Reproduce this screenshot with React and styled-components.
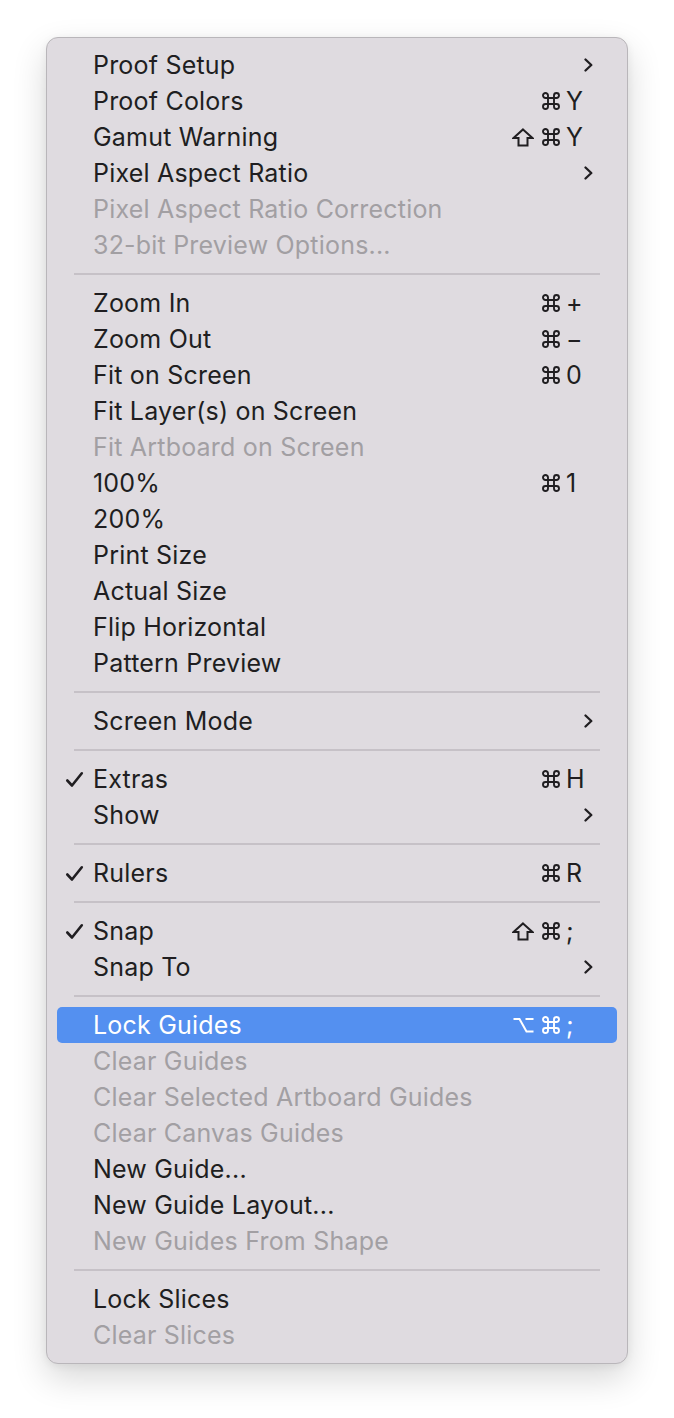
import React from "react";
import styled, { createGlobalStyle } from "styled-components";

const Global = createGlobalStyle`
  html, body { margin: 0; padding: 0; background: #ffffff; }
  body { font-family: Inter, "Noto Sans", sans-serif; -webkit-font-smoothing: antialiased; }
`;

const Page = styled.div`
  width: 674px;
  height: 1418px;
  padding: 37px 0 0 46px;
  box-sizing: border-box;
`;

const Panel = styled.div`
  width: 582px;
  box-sizing: border-box;
  background: #dfdbe0;
  border: 1px solid #b9b6ba;
  border-radius: 12px;
  padding: 9px 10px 10px;
  box-shadow: 0 14px 34px rgba(0, 0, 0, 0.16), 0 2px 8px rgba(0, 0, 0, 0.06);
  display: flex;
  flex-direction: column;
`;

const Row = styled.div`
  height: 36px;
  display: flex;
  align-items: center;
  position: relative;
  padding: 0 24px 0 36px;
  border-radius: 5px;
  font-size: 25px;
  letter-spacing: 0.2px;
  color: ${(p) => (p.$active ? "#ffffff" : p.$disabled ? "#a29fa3" : "#201e21")};
  background: ${(p) => (p.$active ? "#5490f0" : "transparent")};
`;

const Label = styled.span`
  flex: 1;
  white-space: nowrap;
`;

const Check = styled.svg`
  position: absolute;
  left: 8px;
  top: 10px;
  width: 19px;
  height: 17px;
`;

const Shortcut = styled.div`
  display: flex;
  align-items: center;
`;

const Mods = styled.div`
  display: flex;
  align-items: center;
  gap: 7px;
  margin-right: 5px;
`;

const Key = styled.span`
  width: 27px;
  text-align: left;
`;

const Chevron = styled.svg`
  width: 9px;
  height: 14px;
`;

const Separator = styled.div`
  height: 22px;
  display: flex;
  align-items: center;
  padding: 0 17px;
  &::after {
    content: "";
    flex: 1;
    height: 2px;
    background: #c6c1c7;
  }
`;

const IconSvg = styled.svg`
  display: block;
  fill: none;
  stroke: currentColor;
`;

const Cmd = () => (
  <IconSvg width="20" height="20" viewBox="0 0 20 20" strokeWidth="1.9">
    <path d="M7 7 V4.5 A2.5 2.5 0 1 0 4.5 7 H15.5 A2.5 2.5 0 1 0 13 4.5 V15.5 A2.5 2.5 0 1 0 15.5 13 H4.5 A2.5 2.5 0 1 0 7 15.5 V7" />
  </IconSvg>
);

const Shift = () => (
  <IconSvg width="22" height="19" viewBox="0 0 22 19" strokeWidth="2" strokeLinejoin="miter">
    <path d="M11 1.4 L20.5 10 H15.5 V17.5 H6.5 V10 H1.5 Z" />
  </IconSvg>
);

const Opt = () => (
  <IconSvg width="21" height="18" viewBox="0 0 21 18" strokeWidth="2">
    <path d="M0.5 3 H6.5 L13.5 15.5 H20.5 M12.5 3 H20.5" />
  </IconSvg>
);

const mods = { cmd: Cmd, shift: Shift, opt: Opt };

const groups = [
  [
    { label: "Proof Setup", sub: true },
    { label: "Proof Colors", mods: ["cmd"], key: "Y" },
    { label: "Gamut Warning", mods: ["shift", "cmd"], key: "Y" },
    { label: "Pixel Aspect Ratio", sub: true },
    { label: "Pixel Aspect Ratio Correction", disabled: true },
    { label: "32-bit Preview Options...", disabled: true },
  ],
  [
    { label: "Zoom In", mods: ["cmd"], key: "+" },
    { label: "Zoom Out", mods: ["cmd"], key: "\u2212" },
    { label: "Fit on Screen", mods: ["cmd"], key: "0" },
    { label: "Fit Layer(s) on Screen" },
    { label: "Fit Artboard on Screen", disabled: true },
    { label: "100%", mods: ["cmd"], key: "1" },
    { label: "200%" },
    { label: "Print Size" },
    { label: "Actual Size" },
    { label: "Flip Horizontal" },
    { label: "Pattern Preview" },
  ],
  [{ label: "Screen Mode", sub: true }],
  [
    { label: "Extras", checked: true, mods: ["cmd"], key: "H" },
    { label: "Show", sub: true },
  ],
  [{ label: "Rulers", checked: true, mods: ["cmd"], key: "R" }],
  [
    { label: "Snap", checked: true, mods: ["shift", "cmd"], key: ";" },
    { label: "Snap To", sub: true },
  ],
  [
    { label: "Lock Guides", active: true, mods: ["opt", "cmd"], key: ";" },
    { label: "Clear Guides", disabled: true },
    { label: "Clear Selected Artboard Guides", disabled: true },
    { label: "Clear Canvas Guides", disabled: true },
    { label: "New Guide..." },
    { label: "New Guide Layout..." },
    { label: "New Guides From Shape", disabled: true },
  ],
  [
    { label: "Lock Slices" },
    { label: "Clear Slices", disabled: true },
  ],
];

const MenuItem = ({ item }) => (
  <Row $active={item.active} $disabled={item.disabled}>
    {item.checked && (
      <Check viewBox="0 0 19 17" fill="none" stroke="currentColor" strokeWidth="2.6" strokeLinecap="round" strokeLinejoin="round">
        <polyline points="2.3,9.5 7,14.5 16.8,2.3" />
      </Check>
    )}
    <Label>{item.label}</Label>
    {item.key && (
      <Shortcut>
        <Mods>
          {item.mods.map((m) => {
            const M = mods[m];
            return <M key={m} />;
          })}
        </Mods>
        <Key>{item.key}</Key>
      </Shortcut>
    )}
    {item.sub && (
      <Chevron viewBox="0 0 9 14" fill="none" stroke="currentColor" strokeWidth="2.3" strokeLinecap="round" strokeLinejoin="round">
        <polyline points="1.5,1.5 7.3,7 1.5,12.5" />
      </Chevron>
    )}
  </Row>
);

export default function App() {
  return (
    <>
      <Global />
      <Page>
        <Panel>
          {groups.map((g, gi) => (
            <React.Fragment key={gi}>
              {gi > 0 && <Separator />}
              {g.map((item) => (
                <MenuItem key={item.label} item={item} />
              ))}
            </React.Fragment>
          ))}
        </Panel>
      </Page>
    </>
  );
}
